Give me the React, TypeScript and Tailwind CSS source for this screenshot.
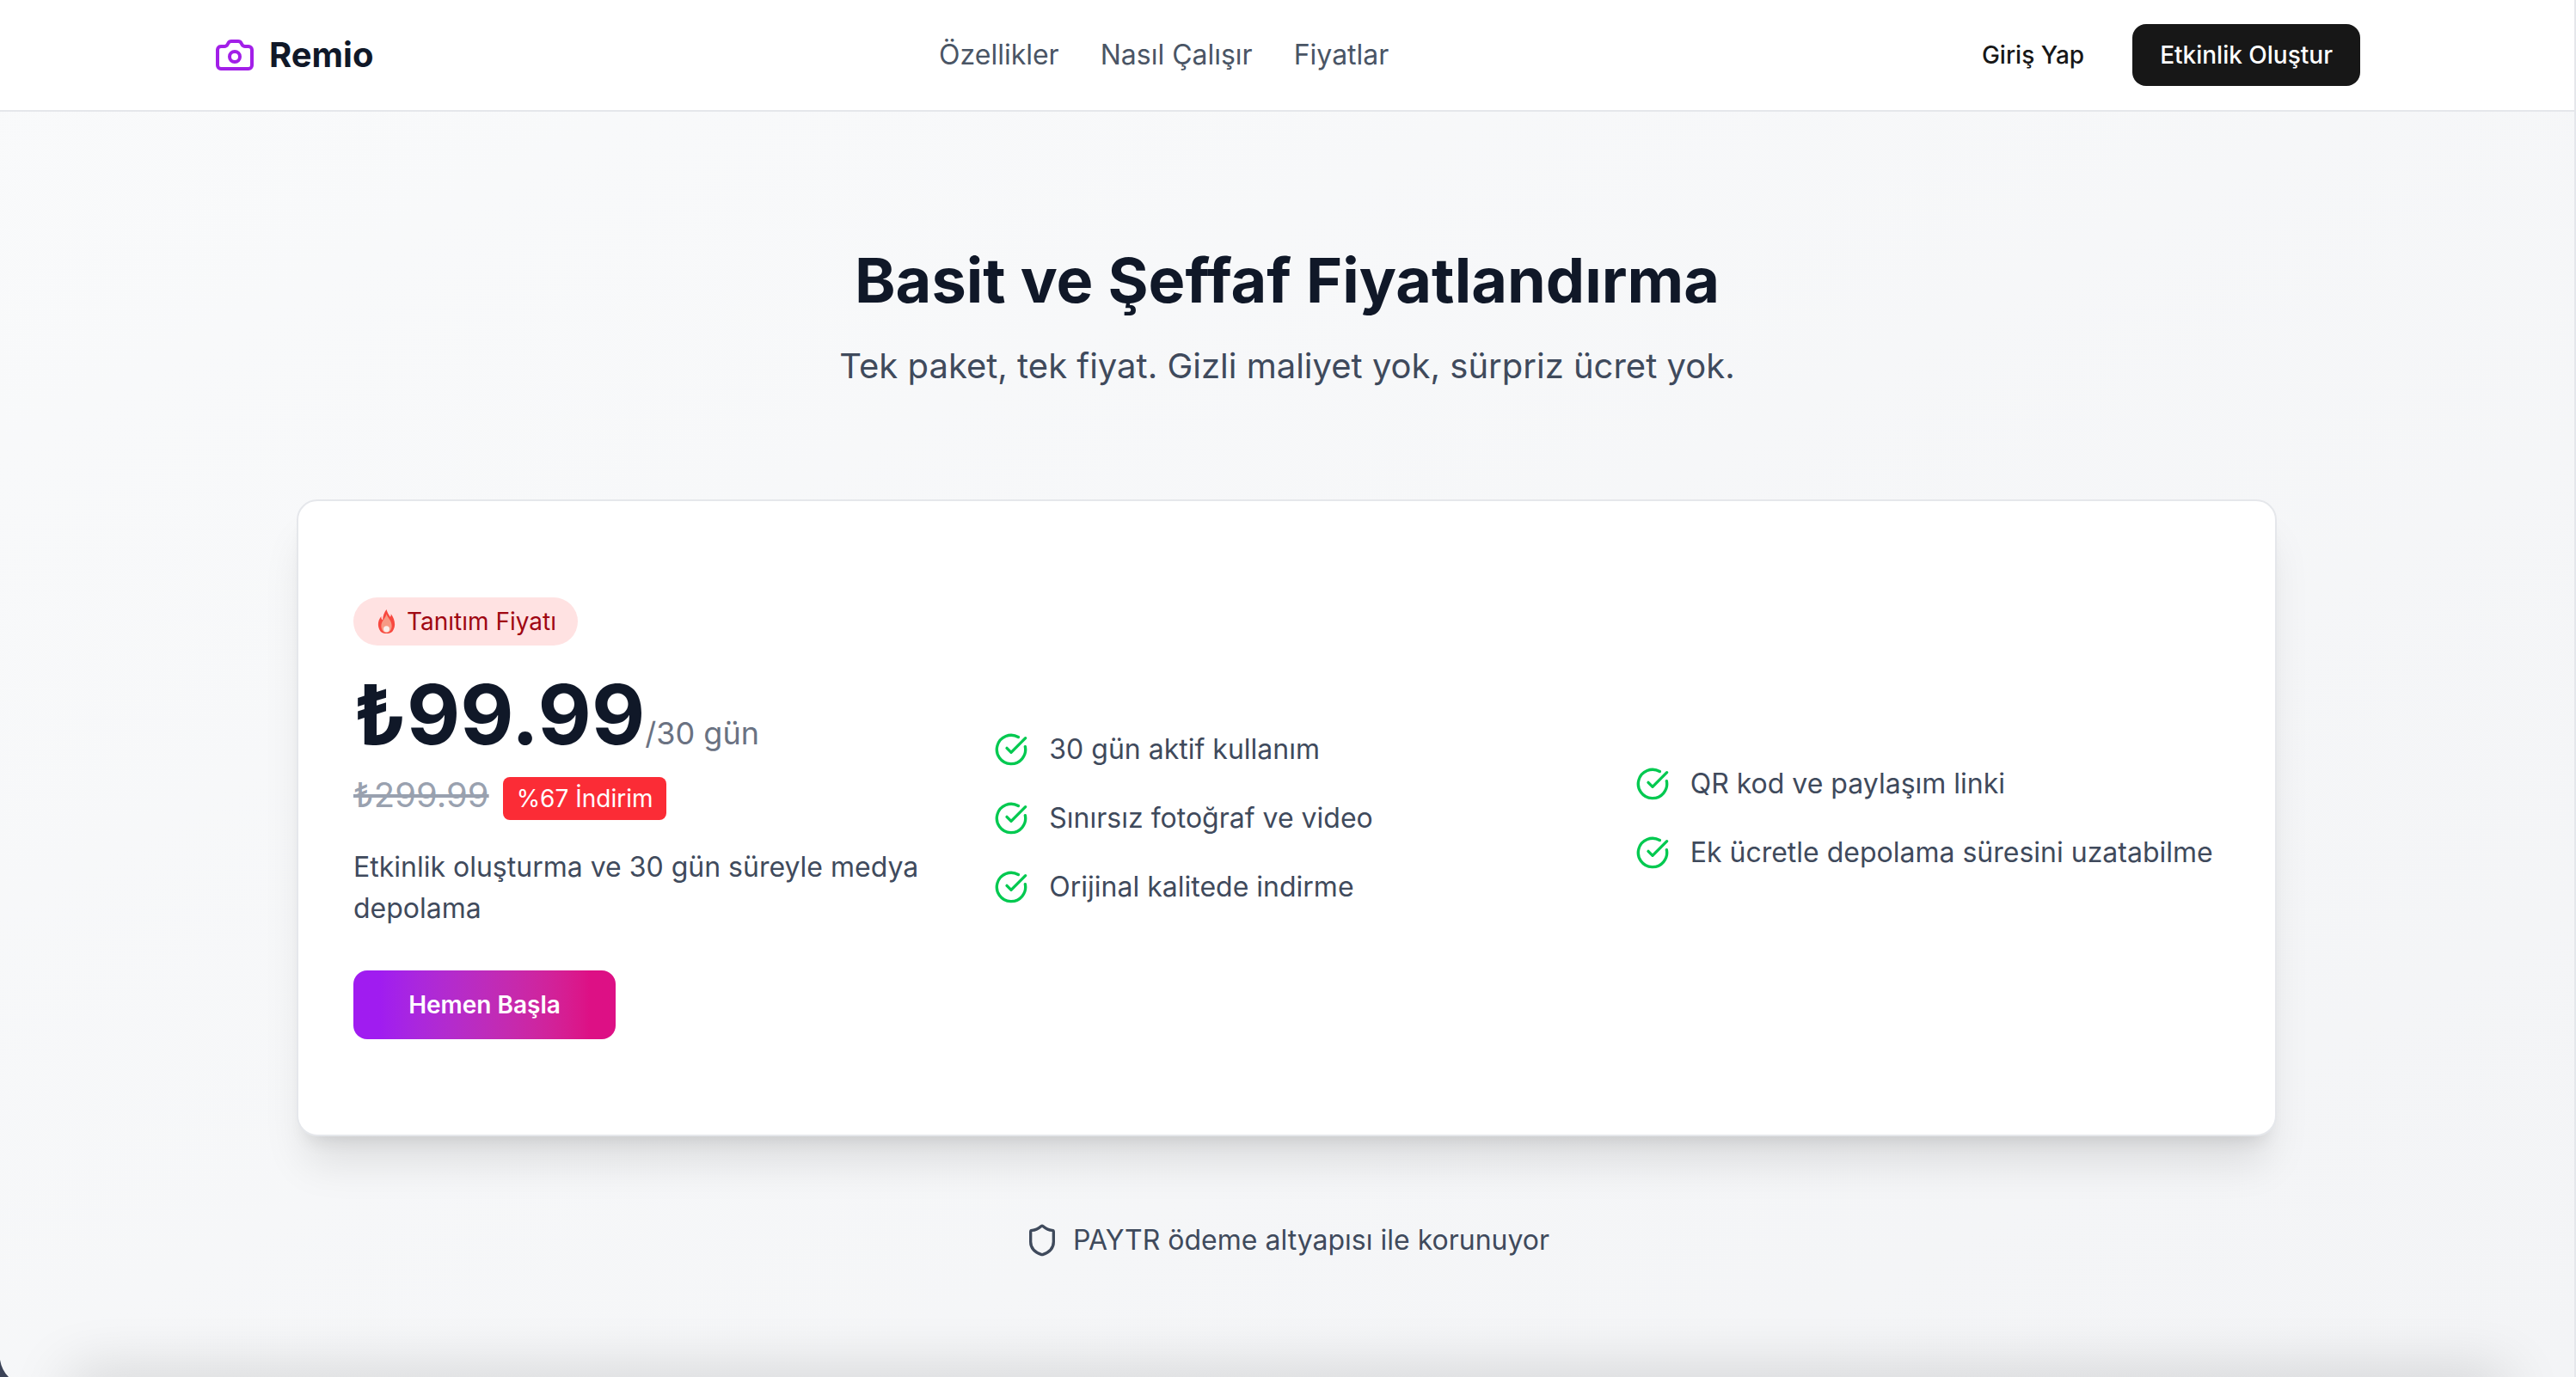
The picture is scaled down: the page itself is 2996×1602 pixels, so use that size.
import React from 'react';
import { Camera, CircleCheckBig, Shield } from 'lucide-react';

const leftFeatures = ['30 gün aktif kullanım', 'Sınırsız fotoğraf ve video', 'Orijinal kalitede indirme'];
const rightFeatures = ['QR kod ve paylaşım linki', 'Ek ücretle depolama süresini uzatabilme'];

const Flame = () => (
  <svg viewBox="0 0 24 32" className="ml-[2px] h-[28px] w-[23px] shrink-0">
    <path d="M12 0c1 4 3 7 5 10 1-1 1-3 1-4 3 4 5 9 5 14 0 3-1 6-3 9-2 2-5 3-8 3s-6-1-8-3c-2-3-3-6-3-9 0-4 1-7 4-11 0 2 0 4 2 5C7 9 9 4 12 0z" fill="#f8483f" />
    <path d="M12 6c1 5 7 8 7 16 0 5-3 9-7 9s-7-4-7-9c0-7 6-10 7-16z" fill="#f79a85" />
    <circle cx="12" cy="26" r="4" fill="#fbeeea" />
  </svg>
);

const FeatureList = ({ items }: { items: string[] }) => (
  <ul className="flex flex-col gap-[32px]">
    {items.map((item) => (
      <li key={item} className="flex items-center gap-[24px] text-[32px] leading-[48px] text-[#3f4a5c]">
        <CircleCheckBig className="h-[40px] w-[40px] shrink-0 text-[#00c950]" strokeWidth={2} />
        <span>{item}</span>
      </li>
    ))}
  </ul>
);

export default function App() {
  return (
    <div className="relative h-[1602px] overflow-hidden border-r-2 border-[#e5e7eb] bg-gradient-to-br from-[#f9fafb] to-[#f3f4f6] font-['Inter',sans-serif]">
      {/* Header */}
      <header className="h-[130px] border-b-2 border-[#e5e7eb] bg-white">
        <div className="mx-auto flex h-[128px] max-w-[2560px] items-center justify-between px-[32px]">
          <div className="flex items-center gap-[16px]">
            <Camera className="h-[48px] w-[48px] text-[#a21fe8]" strokeWidth={2} />
            <span className="text-[40px] font-bold text-[#101828]">Remio</span>
          </div>
          <nav className="mr-[8px] flex items-center gap-[48px] text-[32px] text-[#4a5565]">
            <span>Özellikler</span>
            <span>Nasıl Çalışır</span>
            <span>Fiyatlar</span>
          </nav>
          <div className="flex items-center gap-[32px]">
            <button className="px-[24px] text-[28px] font-medium text-[#171717]">Giriş Yap</button>
            <button className="h-[72px] rounded-[16px] bg-[#171717] px-[32px] text-[28px] font-medium text-white">Etkinlik Oluştur</button>
          </div>
        </div>
      </header>

      <main className="pt-[156px]">
        <div className="text-center">
          <h1 className="text-[72px] font-bold leading-[80px] text-[#101828]">Basit ve Şeffaf Fiyatlandırma</h1>
          <p className="mt-[32px] text-[40px] leading-[56px] text-[#3f4a5c]">Tek paket, tek fiyat. Gizli maliyet yok, sürpriz ücret yok.</p>
        </div>

        {/* Pricing card */}
        <div className="ml-[345px] mt-[127px] grid h-[741px] w-[2303px] grid-cols-3 items-center gap-[65px] rounded-[24px] border-2 border-[#e5e7eb] bg-white p-[64px] shadow-[0_40px_50px_-10px_rgba(0,0,0,0.1),0_16px_20px_-12px_rgba(0,0,0,0.1)]">
          <div>
            <span className="inline-flex h-[56px] items-center gap-[12px] rounded-full bg-[#ffe2e2] px-[25px] text-[28px] text-[#9f0712]">
              <Flame />
              Tanıtım Fiyatı
            </span>
            <div className="mt-[24px] flex items-baseline">
              <span className="text-[96px] font-bold leading-[112px] text-[#101828]">₺99.99</span>
              <span className="text-[36px] text-[#6a7282]">/30 gün</span>
            </div>
            <div className="mt-[8px] flex items-center gap-[16px]">
              <span className="text-[40px] text-[#99a1af] line-through">₺299.99</span>
              <span className="mt-[8px] rounded-[8px] bg-[#fb2c36] px-[16px] py-[4px] text-[28px] leading-[42px] text-white">%67 İndirim</span>
            </div>
            <p className="mt-[30px] text-[32px] leading-[48px] text-[#3f4a5c]">Etkinlik oluşturma ve 30 gün süreyle medya depolama</p>
            <button className="mt-[48px] h-[80px] w-[305px] rounded-[16px] bg-gradient-to-r from-[#a01cf0] from-10% to-[#dd1085] to-90% text-[28px] font-semibold text-white">Hemen Başla</button>
          </div>
          <FeatureList items={leftFeatures} />
          <FeatureList items={rightFeatures} />
        </div>

        <div className="mt-[97px] flex items-center justify-center gap-[16px] text-[32px] text-[#3f4a5c]">
          <Shield className="h-[40px] w-[40px]" strokeWidth={2} />
          <span>PAYTR ödeme altyapısı ile korunuyor</span>
        </div>
      </main>

      {/* Shadow of the sheet sitting just under the fold */}
      <div className="absolute left-[80px] right-[80px] top-[1602px] h-[40px] shadow-[0_0_70px_rgba(0,0,0,0.2)]" />
      <svg viewBox="0 0 10 20" className="absolute bottom-0 left-0 h-[20px] w-[10px]">
        <path d="M0 0Q2 12 10 20L0 20Z" fill="#3b4357" />
      </svg>
    </div>
  );
}
